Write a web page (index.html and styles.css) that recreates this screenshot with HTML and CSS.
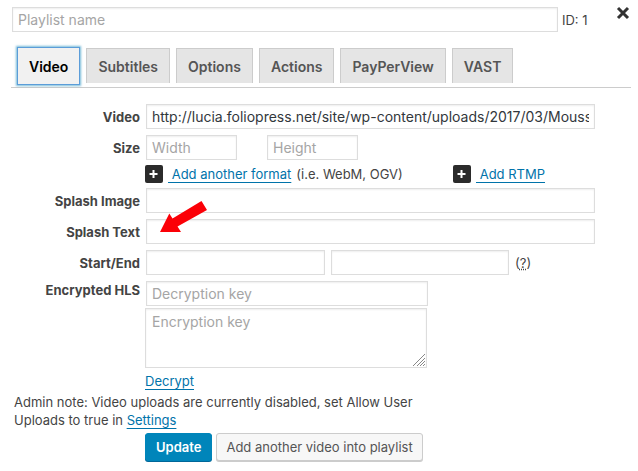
FILE: index.html
```html
<!DOCTYPE html>
<html lang="en">
<head>
<meta charset="utf-8">
<title>Playlist editor</title>
<link rel="stylesheet" href="styles.css">
</head>
<body>
<form class="editor">
  <header class="top">
    <input class="field playlist-name" type="text" placeholder="Playlist name" aria-label="Playlist name">
    <span class="playlist-id">ID: 1</span>
    <button class="close" type="button" aria-label="Close">
      <svg width="14" height="14" viewBox="0 0 14 14"><path d="M2 2l10 10M12 2L2 12" stroke="#333" stroke-width="3" fill="none"/></svg>
    </button>
  </header>

  <nav class="tabs">
    <button class="tab tab-active" type="button">Video</button>
    <button class="tab" type="button">Subtitles</button>
    <button class="tab" type="button">Options</button>
    <button class="tab" type="button">Actions</button>
    <button class="tab" type="button">PayPerView</button>
    <button class="tab" type="button">VAST</button>
  </nav>

  <main class="rows">
    <div class="row">
      <label class="label" for="src">Video</label>
      <input class="field" id="src" type="text" value="http://lucia.foliopress.net/site/wp-content/uploads/2017/03/Moussaka.mp4">
    </div>
    <div class="row row-size">
      <label class="label" for="width">Size</label>
      <div class="size">
        <input class="field short" id="width" type="text" placeholder="Width">
        <input class="field short" type="text" placeholder="Height" aria-label="Height">
      </div>
    </div>
    <div class="row row-add">
      <div class="add add-format">
        <svg class="plus" width="18" height="18" viewBox="0 0 18 18"><rect width="18" height="18" rx="2" fill="#2b2b2b"/><path d="M8.500 5v8M4.500 9h8" stroke="#fff" stroke-width="2"/></svg>
        <a href="#">&nbsp;Add another format</a>
        <span>(i.e. WebM, OGV)</span>
      </div>
      <div class="add">
        <svg class="plus" width="18" height="18" viewBox="0 0 18 18"><rect width="18" height="18" rx="2" fill="#2b2b2b"/><path d="M8.500 5v8M4.500 9h8" stroke="#fff" stroke-width="2"/></svg>
        <a href="#">&nbsp;Add RTMP</a>
      </div>
    </div>
    <div class="row">
      <label class="label" for="splash">Splash Image</label>
      <input class="field" id="splash" type="text">
    </div>
    <div class="row row-text">
      <label class="label" for="splash-text">Splash Text</label>
      <input class="field" id="splash-text" type="text">
      <svg class="arrow" width="50" height="36" viewBox="0 0 50 36"><path d="M3 34L12.300 15.500L15.500 20.500L44.500 3L50 12L20.500 28.500L24 34Z" fill="#fb0007"/></svg>
    </div>
    <div class="row">
      <label class="label" for="start">Start/End</label>
      <div class="range">
        <input class="field" id="start" type="text">
        <input class="field" type="text" aria-label="End">
        <span class="help">(<abbr title="Start and end time">?</abbr>)</span>
      </div>
    </div>
    <div class="row row-keys">
      <label class="label" for="key">Encrypted HLS</label>
      <div class="keys">
        <input class="field" id="key" type="text" placeholder="Decryption key">
        <div class="area">
          <textarea class="field" placeholder="Encryption key" aria-label="Encryption key"></textarea>
          <svg class="grip" width="14" height="14" viewBox="0 0 14 14"><path d="M1 13L13 1M5 13L13 5M8 13L13 8M11 13L13 11" stroke="#888" fill="none"/></svg>
        </div>
        <a href="#">Decrypt</a>
      </div>
    </div>
  </main>

  <p class="note">Admin note: Video uploads are currently disabled, set Allow User Uploads to true in <a href="#">Settings</a></p>

  <footer class="actions">
    <button class="button primary" type="submit">Update</button>
    <button class="button" type="button">Add another video into playlist</button>
  </footer>
</form>
</body>
</html>
```
FILE: styles.css
```css
* {
  box-sizing: border-box;
}

body {
  margin: 0;
  background: #fff;
  color: #444;
  font: 13px/18px Inter, "Liberation Sans", sans-serif;
}

input,
textarea,
button {
  font-family: inherit;
  margin: 0;
}

a {
  color: #0073aa;
  text-underline-offset: 3px;
}

.editor {
  padding: 7px 8px 8px 12px;
}

.field {
  display: block;
  min-width: 0;
  height: 25px;
  padding: 0 5px;
  border: 1px solid #ddd;
  border-radius: 0;
  background: #fff;
  box-shadow: inset 0 1px 2px rgba(0, 0, 0, 0.07);
  color: #32373c;
  font-size: 14px;
}

.field::placeholder {
  color: #a5a5a5;
}

.top {
  display: flex;
  align-items: flex-start;
}

.playlist-name {
  flex: 1;
}

.playlist-id {
  width: 55px;
  padding: 4px 0 0 4px;
}

.close {
  display: flex;
  padding: 0;
  border: 0;
  background: none;
}

.close svg {
  margin: -1px 0 0 3px;
}

.tabs {
  display: flex;
  align-items: flex-start;
  gap: 6px;
  height: 56px;
  padding: 16px 0 0 6px;
  margin: 0 -1px;
  border-bottom: 1px solid #ccc;
}

.tab {
  height: 35px;
  padding: 0 11px;
  border: 1px solid #ccc;
  border-bottom: 0;
  background: #e5e5e5;
  color: #555;
  font-size: 14px;
  font-weight: 600;
}

.tab-active {
  height: 38px;
  margin-top: -1px;
  border: 1px solid #5b9dd9;
  background: #f1f1f1;
  box-shadow: 0 0 2px 1px rgba(30, 140, 190, 0.6);
  color: #000;
}

.rows {
  padding: 16px 35px 0 0;
}

.row {
  display: grid;
  grid-template-columns: 128px minmax(0, 1fr);
  column-gap: 6px;
  margin-bottom: 6px;
}

.label {
  padding-top: 4px;
  font-weight: 700;
  text-align: right;
}

.size {
  display: flex;
  gap: 30px;
}

.short {
  width: 91px;
}

.row-size,
.row-add {
  margin-bottom: 5px;
}

.row-add {
  display: flex;
  column-gap: 0;
  padding-left: 133px;
}

.add {
  display: flex;
  gap: 5px;
  white-space: nowrap;
}

.add-format {
  width: 308px;
}

.plus {
  flex: none;
}

.row-text {
  position: relative;
}

.arrow {
  position: absolute;
  top: -21px;
  left: 145px;
}

.range {
  display: grid;
  grid-template-columns: 1fr 1fr 80px;
  column-gap: 6px;
}

.help {
  padding-top: 4px;
}

.row-keys {
  margin-bottom: 3px;
}

.row-keys .label {
  padding-top: 0;
}

.keys {
  display: flex;
  flex-direction: column;
  align-items: flex-start;
  width: 282px;
  margin-left: -1px;
}

.keys input {
  align-self: stretch;
  margin: 0 -1px 2px 1px;
}

.area {
  position: relative;
  width: 100%;
  margin-bottom: 4px;
}

.area textarea {
  width: 100%;
  height: 60px;
  padding: 4px 6px;
  line-height: 18px;
  resize: none;
}

.grip {
  position: absolute;
  right: 1px;
  bottom: 1px;
  pointer-events: none;
}

.note {
  width: 420px;
  margin: 0 0 4px 2px;
}

.actions {
  display: flex;
  gap: 4px;
  padding-left: 133px;
}

.button {
  height: 28px;
  padding: 0 9px;
  border: 1px solid #ccc;
  border-radius: 3px;
  background: #f7f7f7;
  box-shadow: 0 1px 0 #ccc;
  color: #555;
  font-size: 13px;
}

.primary {
  padding: 0 10px;
  border-color: #0085ba;
  background: #0085ba;
  box-shadow: 0 1px 0 #006799;
  color: #fff;
  font-weight: 600;
}
```
